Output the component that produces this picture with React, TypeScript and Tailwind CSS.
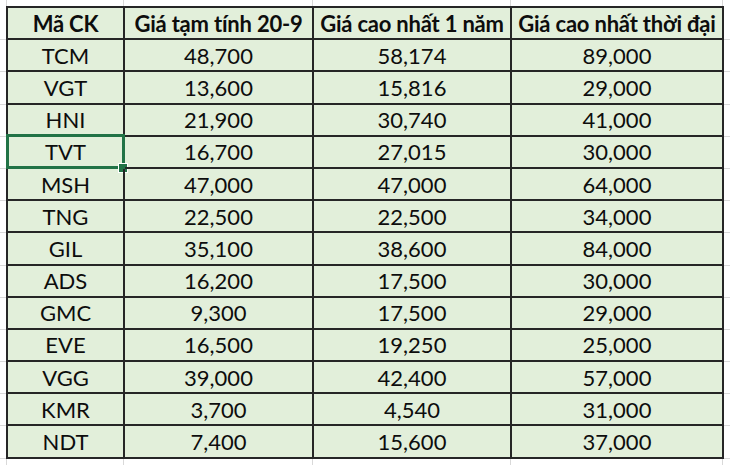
import React from 'react';

// Bảng giá – kiểu ô Excel
const rows = [
  ['TCM', '48,700', '58,174', '89,000'],
  ['VGT', '13,600', '15,816', '29,000'],
  ['HNI', '21,900', '30,740', '41,000'],
  ['TVT', '16,700', '27,015', '30,000'],
  ['MSH', '47,000', '47,000', '64,000'],
  ['TNG', '22,500', '22,500', '34,000'],
  ['GIL', '35,100', '38,600', '84,000'],
  ['ADS', '16,200', '17,500', '30,000'],
  ['GMC', '9,300', '17,500', '29,000'],
  ['EVE', '16,500', '19,250', '25,000'],
  ['VGG', '39,000', '42,400', '57,000'],
  ['KMR', '3,700', '4,540', '31,000'],
  ['NDT', '7,400', '15,600', '37,000'],
];

const headers = ['Mã CK', 'Giá tạm tính 20-9', 'Giá cao nhất 1 năm', 'Giá cao nhất thời đại'];
const widths = ['w-[117px]', 'w-[189px]', 'w-[198px]', 'w-[212px]'];

const GridStrip: React.FC = () => (
  <div className="flex h-[6px]">
    <div className="w-[7px] border-r border-[#d9d9d9]" />
    <div className="w-[117px] border-r border-[#d9d9d9]" />
    <div className="w-[189px] border-r border-[#d9d9d9]" />
    <div className="w-[198px] border-r border-[#d9d9d9]" />
    <div className="w-[212px] border-r border-[#d9d9d9]" />
  </div>
);

const SideStrip: React.FC = () => (
  <div className="w-[6px] flex flex-col pt-[2px]">
    {Array.from({ length: 14 }).map((_, i) => (
      <div key={i} className="h-[32.2px] border-b border-[#d9d9d9]" />
    ))}
  </div>
);

export default function App() {
  return (
    <div
      className="w-[730px] h-[465px] bg-white overflow-hidden text-[#0d0d0d]"
      style={{ fontFamily: 'Lato, "Open Sans", sans-serif' }}
    >
      <GridStrip />
      <div className="flex">
        <SideStrip />
        <div className="border-t-2 border-l-2 border-[#262626] bg-[#e2efda]">
          <div className="flex h-[32.2px]">
            {headers.map((h, i) => (
              <div
                key={h}
                className={`${widths[i]} border-r-2 border-b-2 border-[#262626] flex items-center justify-center text-[22px] font-bold tracking-[-0.2px] whitespace-nowrap`}
              >
                {h}
              </div>
            ))}
          </div>
          {rows.map((r) => (
            <div key={r[0]} className="flex h-[32.2px]">
              {r.map((c, i) => (
                <div
                  key={i}
                  className={`${widths[i]} relative border-r-2 border-b-2 border-[#262626] flex items-center justify-center text-[22px]`}
                >
                  {c}
                  {r[0] === 'TVT' && i === 0 && (
                    <>
                      <div className="absolute left-[-2px] top-[-3px] w-[119px] h-[35px] border-[3px] border-[#217346]" />
                      <div className="absolute left-[111px] top-[27px] w-[8px] h-[8px] bg-[#217346] ring-1 ring-white" />
                    </>
                  )}
                </div>
              ))}
            </div>
          ))}
        </div>
        <SideStrip />
      </div>
      <GridStrip />
    </div>
  );
}
